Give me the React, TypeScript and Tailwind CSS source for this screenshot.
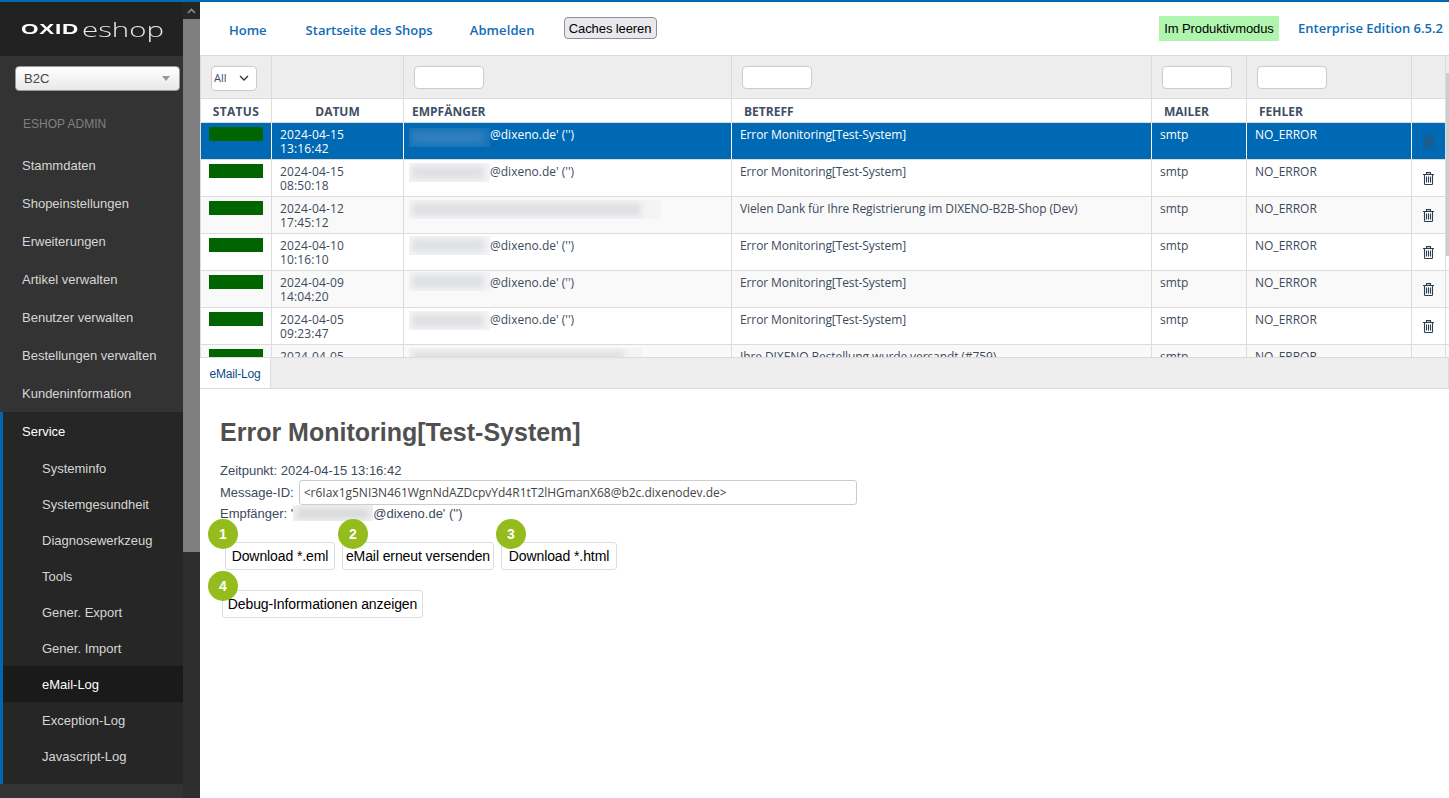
const sideItems = ['Stammdaten', 'Shopeinstellungen', 'Erweiterungen', 'Artikel verwalten', 'Benutzer verwalten', 'Bestellungen verwalten', 'Kundeninformation']
const serviceItems = ['Systeminfo', 'Systemgesundheit', 'Diagnosewerkzeug', 'Tools', 'Gener. Export', 'Gener. Import', 'eMail-Log', 'Exception-Log', 'Javascript-Log']

const rows = [
  { date: '2024-04-15', time: '13:16:42', blur: 81, top: 5, rest: "@dixeno.de' ('')", subject: 'Error Monitoring[Test-System]' },
  { date: '2024-04-15', time: '08:50:18', blur: 81, top: 3, rest: "@dixeno.de' ('')", subject: 'Error Monitoring[Test-System]' },
  { date: '2024-04-12', time: '17:45:12', blur: 252, top: 3, rest: '', subject: 'Vielen Dank für Ihre Registrierung im DIXENO-B2B-Shop (Dev)' },
  { date: '2024-04-10', time: '10:16:10', blur: 81, top: 2, rest: "@dixeno.de' ('')", subject: 'Error Monitoring[Test-System]' },
  { date: '2024-04-09', time: '14:04:20', blur: 81, top: 1, rest: "@dixeno.de' ('')", subject: 'Error Monitoring[Test-System]' },
  { date: '2024-04-05', time: '09:23:47', blur: 81, top: 3, rest: "@dixeno.de' ('')", subject: 'Error Monitoring[Test-System]' },
  { date: '2024-04-05', time: '08:12:31', blur: 233, top: 3, rest: '', subject: 'Ihre DIXENO Bestellung wurde versandt (#759)' },
]

const grid = 'grid grid-cols-[72px_132px_328px_420px_95px_165px_34px]'
const cell = 'border-r border-[#dcdcdc]'

function Sidebar() {
  return (
    <aside className="w-[200px] shrink-0 flex h-full bg-[#333333] font-['Liberation_Sans',sans-serif]">
      <div className="w-[183px] shrink-0 flex flex-col">
        <div className="h-[54px] bg-[#222222] flex items-center pl-[21px] pt-[1px] text-white">
          <span className="font-black text-[15px] tracking-[0.5px] w-[61px] origin-left scale-x-[1.5]">OXID</span>
          <span className="font-['Open_Sans',sans-serif] font-light text-[21px] leading-none text-[#e8e8e8] origin-left scale-x-[1.4]">eshop</span>
        </div>
        <div className="mt-[10px] ml-[15px] w-[165px] h-[25px] rounded-[4px] border border-[#999999] bg-gradient-to-b from-white to-[#e8e8e8] flex items-center pl-[8px] pr-[9px] justify-between">
          <span className="text-[13px] text-[#444444]">B2C</span>
          <span className="w-0 h-0 border-x-[4px] border-x-transparent border-t-[5px] border-t-[#999999]" />
        </div>
        <div className="mt-[23px] pl-[23px] h-[20px] text-[12px] leading-[20px] text-[#808080]">ESHOP ADMIN</div>
        <nav className="mt-[12px] flex flex-col text-[13px] text-[#d6d6d6]">
          {sideItems.map((item) => (
            <div key={item} className="h-[38px] leading-[40px] pl-[22px]">{item}</div>
          ))}
        </nav>
        <div className="border-l-[3px] border-[#0069b4] bg-[#262626] text-[13px] text-[#d6d6d6]">
          <div className="h-[38px] leading-[40px] pl-[19px] text-white">Service</div>
          {serviceItems.map((item) => (
            <div key={item} className={`h-[36px] leading-[38px] pl-[39px] ${item === 'eMail-Log' ? 'bg-[#1a1a1a] text-white' : ''}`}>{item}</div>
          ))}
          <div className="h-[10px]" />
        </div>
      </div>
      <div className="w-[17px] shrink-0 bg-[#2e2e2e] flex flex-col">
        <div className="h-[17px] bg-[#262626] flex items-center justify-center">
          <svg width="9" height="6" viewBox="0 0 9 6" fill="none" stroke="#8c8c8c" strokeWidth="1.6"><path d="M1 5l3.5-3.5L8 5" /></svg>
        </div>
        <div className="h-[533px] bg-[#7e7e7e]" />
      </div>
    </aside>
  )
}

function TopBar() {
  return (
    <header className="h-[53px] shrink-0 flex justify-between font-['Open_Sans',sans-serif] font-semibold text-[13px] text-[#0f6cb5]">
      <div className="flex items-start pl-[29px] pt-[15px] leading-[26px]">
        <span>Home</span>
        <span className="ml-[39px]">Startseite des Shops</span>
        <span className="ml-[37px] tracking-[0.1px]">Abmelden</span>
        <button className="ml-[29px] w-[93px] h-[22px] pt-[1px] rounded-[4px] border border-[#8f8f9d] bg-[#e9e9ed] font-['Liberation_Sans',sans-serif] font-normal text-[13px] leading-[20px] tracking-[-0.1px] text-black">Caches leeren</button>
      </div>
      <div className="flex items-center pr-[6px]">
        <span className="w-[120px] h-[25px] text-center leading-[25px] bg-[#b0f5ae] font-['Liberation_Sans',sans-serif] font-normal text-[13px] tracking-[-0.1px] text-black">Im Produktivmodus</span>
        <span className="ml-[19px]">Enterprise Edition 6.5.2</span>
      </div>
    </header>
  )
}

function FilterInput() {
  return <input className="block w-[70px] h-[23px] rounded-[4px] border border-[#cccccc] bg-white" />
}

function Trash({ active }: { active: boolean }) {
  return (
    <svg width="11" height="13" viewBox="0 0 11 13" fill="none" stroke={active ? '#34526f' : '#2c3e50'} strokeWidth="1.1">
      <path d="M0 2.500h11M3.500 2.500V.6h4v1.900M1.500 2.500v9.200q0 .8.8.8h6.400q.8 0 .8-.8V2.500M3.500 4.500v6M5.500 4.500v6M7.500 4.500v6" />
    </svg>
  )
}

function Blurred({ width, top, active }: { width: number; top: number; active: boolean }) {
  return (
    <div
      className={`h-[19px] shrink-0 overflow-hidden flex items-center pl-[3px] ${active ? 'bg-[#1673b7]' : 'bg-[#f3f4f5]'}`}
      style={{ width, marginTop: top - 4 }}
    >
      <div className={`h-[13px] w-[92%] blur-[3px] ${active ? 'bg-[#2f80bc]' : 'bg-[#dfe0e3]'}`} />
    </div>
  )
}

function LogTable() {
  return (
    <section className="relative h-[303px] shrink-0 overflow-hidden border-y border-[#dcdcdc] font-['Open_Sans',sans-serif] text-[12px] text-[#3c4a5c]">
      <div className={`${grid} h-[43px] bg-[#ededed] border-b border-[#dcdcdc]`}>
        <div className={`${cell} border-l pl-[10px] pt-[10px]`}>
          <div className="relative w-[46px] h-[25px]">
            <select className="block appearance-none w-full h-full rounded-[4px] border border-[#cccccc] bg-white text-[11px] pl-[2px]">
              <option>All</option>
            </select>
            <svg className="absolute right-[8px] top-[9px]" width="10" height="6" viewBox="0 0 10 6" fill="none" stroke="#333333" strokeWidth="1.300"><path d="M1 1l4 4 4-4" /></svg>
          </div>
        </div>
        <div className={cell} />
        <div className={`${cell} pl-[10px] pt-[10px]`}><FilterInput /></div>
        <div className={`${cell} pl-[10px] pt-[10px]`}><FilterInput /></div>
        <div className={`${cell} pl-[10px] pt-[10px]`}><FilterInput /></div>
        <div className={`${cell} pl-[10px] pt-[10px]`}><FilterInput /></div>
        <div className={cell} />
      </div>
      <div className={`${grid} h-[24px] leading-[25px] bg-white font-bold text-[#3f4d66] border-b border-[#dcdcdc]`}>
        <div className={`${cell} border-l text-center tracking-[0.3px]`}>STATUS</div>
        <div className={`${cell} text-center`}>DATUM</div>
        <div className={`${cell} pl-[8px]`}>EMPFÄNGER</div>
        <div className={`${cell} pl-[12px]`}>BETREFF</div>
        <div className={`${cell} pl-[12px]`}>MAILER</div>
        <div className={`${cell} pl-[12px]`}>FEHLER</div>
        <div className={cell} />
      </div>
      {rows.map((r, i) => {
        const active = i === 0
        const bg = active ? 'bg-[#0069b4] text-white' : i % 2 === 0 ? 'bg-[#f9f9f9]' : 'bg-white'
        const line = active ? 'border-r border-white' : cell
        return (
          <div key={r.date + r.time} className={`${grid} h-[37px] border-b border-[#dcdcdc] ${bg}`}>
            <div className={`${line} border-l border-l-[#dcdcdc] pl-[8px] pt-[4px]`}>
              <div className="w-[54px] h-[14px] bg-[#006400]" />
            </div>
            <div className={`${line} pl-[8px] pt-[5px] leading-[14px] tracking-[0.15px]`}>
              <div>{r.date}</div>
              <div>{r.time}</div>
            </div>
            <div className={`${line} pl-[5px] pt-[4px] flex items-start`}>
              <Blurred width={r.blur} top={r.top} active={active} />
              {r.rest && <span className="leading-[16px]">{r.rest}</span>}
            </div>
            <div className={`${line} pl-[8px] pt-[4px] leading-[16px] whitespace-nowrap tracking-[-0.1px]`}>{r.subject}</div>
            <div className={`${line} pl-[8px] pt-[4px] leading-[16px]`}>smtp</div>
            <div className={`${line} pl-[8px] pt-[4px] leading-[16px]`}>NO_ERROR</div>
            <div className={`${cell} pl-[11px] pt-[12px]`}><Trash active={active} /></div>
          </div>
        )
      })}
      <div className="absolute right-0 top-[17px] w-[3px] h-[183px] bg-[#cdcdcd]" />
    </section>
  )
}

function Badge({ n, className }: { n: number; className: string }) {
  return (
    <span className={`absolute w-[30px] h-[30px] rounded-full bg-[#94bc1c] text-white text-[14px] font-bold flex items-center justify-center ${className}`}>{n}</span>
  )
}

function ActionButton({ label, className }: { label: string; className: string }) {
  return (
    <button className={`block h-[28px] rounded-[3px] border border-[#dddddd] bg-white text-[14px] tracking-[-0.1px] whitespace-nowrap text-black ${className}`}>{label}</button>
  )
}

function Detail() {
  return (
    <section className="flex-1 pl-[20px] pt-[28px] font-['Liberation_Sans',sans-serif] text-[13px] text-[#3c4a5c]">
      <h1 className="text-[25px] leading-[30px] font-bold text-[#505050]">Error Monitoring[Test-System]</h1>
      <div className="mt-[16px] h-[15px] leading-[15px]">Zeitpunkt: 2024-04-15 13:16:42</div>
      <div className="mt-[2px] flex items-center h-[25px]">
        <span>Message-ID:</span>
        <input readOnly value="<r6Iax1g5NI3N461WgnNdAZDcpvYd4R1tT2lHGmanX68@b2c.dixenodev.de>" className="ml-[5px] w-[558px] h-[25px] rounded-[3px] border border-[#cccccc] pl-[4px] font-['Open_Sans',sans-serif] text-[12px] text-[#444444]" />
      </div>
      <div className="h-[16px] leading-[18px] flex">
        <span>Empfänger: '</span>
        <span className="w-[80px] h-[16px] overflow-hidden bg-[#f0f1f2] flex items-center pl-[4px]">
          <span className="block w-[72px] h-[11px] bg-[#d9dadd] blur-[3px]" />
        </span>
        <span>@dixeno.de' ('')</span>
      </div>
      <div className="relative mt-[21px] -ml-[20px] pl-[25px]">
        <div className="flex">
          <ActionButton label="Download *.eml" className="w-[110px]" />
          <ActionButton label="eMail erneut versenden" className="w-[152px] ml-[7px]" />
          <ActionButton label="Download *.html" className="w-[116px] ml-[7px]" />
        </div>
        <ActionButton label="Debug-Informationen anzeigen" className="w-[201px] mt-[20px] -ml-[3px]" />
        <Badge n={1} className="left-[8px] -top-[23px]" />
        <Badge n={2} className="left-[138px] -top-[23px]" />
        <Badge n={3} className="left-[296px] -top-[23px]" />
        <Badge n={4} className="left-[8px] top-[29px]" />
      </div>
    </section>
  )
}

export default function App() {
  return (
    <div className="w-[1449px] h-[798px] overflow-hidden flex flex-col bg-white">
      <div className="h-[2px] shrink-0 bg-[#0069b4]" />
      <div className="flex-1 flex min-h-0">
        <Sidebar />
        <main className="flex-1 min-w-0 flex flex-col">
          <TopBar />
          <LogTable />
          <div className="h-[31px] shrink-0 flex bg-[#ededed] border-b border-r border-[#dcdcdc] font-['Liberation_Sans',sans-serif] text-[12px] text-[#0b4a8a]">
            <div className="w-[71px] h-[30px] leading-[33px] text-center tracking-[-0.2px] bg-white border-r border-[#dcdcdc]">eMail-Log</div>
          </div>
          <Detail />
        </main>
      </div>
    </div>
  )
}
